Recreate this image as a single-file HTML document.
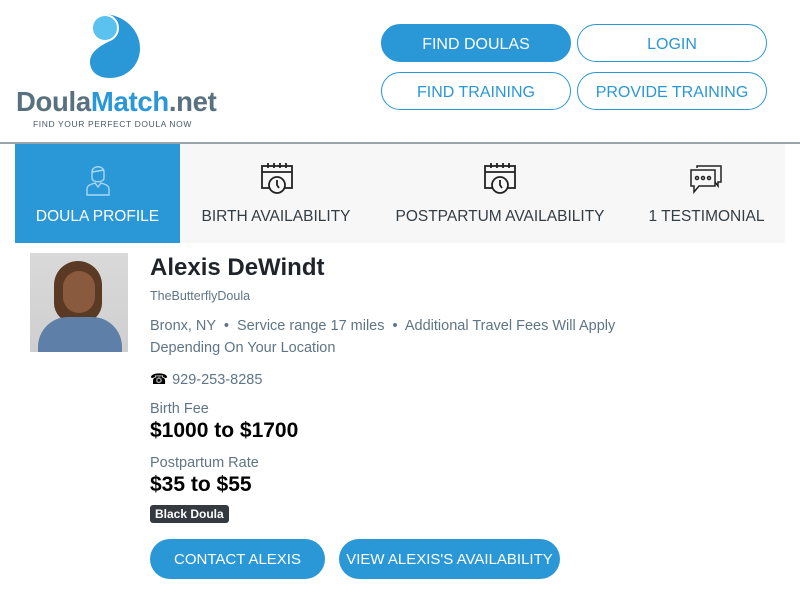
<!DOCTYPE html>
<html><head><style>
body{margin:0;width:800px;height:600px;background:#fff;font-family:"Liberation Sans",sans-serif;position:relative;overflow:hidden}
.a{position:absolute}
.btn{position:absolute;width:188px;height:36px;border:1.5px solid #2a97d6;border-radius:19px;color:#2a97d6;font-size:16px;text-align:center;line-height:40px;box-sizing:content-box}
.btn.f{background:#2a97d6;color:#fff}
.tab{position:absolute;top:144px;height:99px;text-align:center;font-size:15.5px;color:#333d45}
.tab span{position:absolute;left:0;right:0;top:64px}
.g{color:#5f7585;font-size:14.5px}
.cb{position:absolute;top:539px;height:40px;border-radius:20px;background:#2a97d6;color:#fff;font-size:15px;line-height:42px;text-align:center}
</style></head><body>
<svg class="a" style="left:88px;top:12px" width="54" height="68" viewBox="0 0 54 68">
<path d="M14 2 C36 2 52 18 52 36 C52 54 38 66 22 66 C8 66 2 58 2 50 C2 40 12 34 20 30 C28 26 32 20 28 12 C26 6 20 3 14 2Z" fill="#2a97d6"/>
<circle cx="17" cy="16" r="13" fill="#5bc2f0" stroke="#fff" stroke-width="2"/>
</svg>
<div class="a" style="left:16px;top:86px;font-size:27.5px;font-weight:bold;letter-spacing:-0.3px;color:#59707e">Doula<span style="color:#2a97d6">Match</span>.net</div>
<div class="a" style="left:33px;top:119px;font-size:8.5px;color:#475a66;letter-spacing:0.6px">FIND YOUR PERFECT DOULA NOW</div>
<div class="btn f" style="left:381px;top:24px">FIND DOULAS</div>
<div class="btn" style="left:577px;top:24px">LOGIN</div>
<div class="btn" style="left:381px;top:72px">FIND TRAINING</div>
<div class="btn" style="left:577px;top:72px">PROVIDE TRAINING</div>
<div class="a" style="left:0;top:142px;width:800px;height:1.5px;background:#9aa6ae"></div>
<div class="a" style="left:15px;top:144px;width:770px;height:99px;background:#f7f7f7"></div>
<div class="tab" style="left:15px;width:165px;background:#2a97d6;color:#fff">
<svg class="a" style="left:70px;top:18px" width="26" height="34" viewBox="0 0 26 34" fill="none" stroke="#a9d8f5" stroke-width="1.4"><path d="M7 10 C7 3 19 3 19 10 L19 16 C19 21 7 21 7 16Z"/><path d="M7 10 L19 8"/><path d="M2 33 L2 27 C2 23 7 22 10 21 L13 25 L16 21 C19 22 24 23 24 27 L24 33Z"/></svg>
<span>DOULA PROFILE</span></div>
<div class="tab" style="left:180px;width:192px">
<svg class="a" style="left:80px;top:18px" width="34" height="34" viewBox="0 0 34 34" fill="none" stroke="#222" stroke-width="1.8"><rect x="2" y="4" width="30" height="22"/><path d="M2 10H32M8 1V6M14 1V6M20 1V6M26 1V6"/><circle cx="17" cy="23" r="8" fill="#f7f7f7"/><path d="M17 18V23L19 26"/></svg>
<span>BIRTH AVAILABILITY</span></div>
<div class="tab" style="left:372px;width:256px">
<svg class="a" style="left:111px;top:18px" width="34" height="34" viewBox="0 0 34 34" fill="none" stroke="#222" stroke-width="1.8"><rect x="2" y="4" width="30" height="22"/><path d="M2 10H32M8 1V6M14 1V6M20 1V6M26 1V6"/><circle cx="17" cy="23" r="8" fill="#f7f7f7"/><path d="M17 18V23L19 26"/></svg>
<span>POSTPARTUM AVAILABILITY</span></div>
<div class="tab" style="left:628px;width:157px">
<svg class="a" style="left:61px;top:20px" width="34" height="32" viewBox="0 0 34 32" fill="none" stroke="#222" stroke-width="1.5"><path d="M8 4V2H32V18H29V22L26 18"/><path d="M2 6H26V22H10L5 28V22H2Z" fill="#f7f7f7"/><circle cx="8" cy="14" r="1.5"/><circle cx="14" cy="14" r="1.5"/><circle cx="20" cy="14" r="1.5"/></svg>
<span>1 TESTIMONIAL</span></div>
<div class="a" style="left:30px;top:253px;width:98px;height:99px;background:linear-gradient(#d9d9d9,#cfcfcf)">
<div class="a" style="left:24px;top:8px;width:48px;height:62px;border-radius:24px 24px 20px 20px;background:#5a3a25"></div>
<div class="a" style="left:33px;top:18px;width:32px;height:42px;border-radius:16px;background:#8a5a3e"></div>
<div class="a" style="left:8px;top:64px;width:84px;height:35px;border-radius:30px 30px 0 0;background:#5d7fa8"></div></div>
<div class="a" style="left:150px;top:254px;font-size:24px;font-weight:bold;color:#1f242a">Alexis DeWindt</div>
<div class="a g" style="left:150px;top:289px;font-size:12.5px">TheButterflyDoula</div>
<div class="a g" style="left:150px;top:315px;line-height:22px;width:500px">Bronx, NY &nbsp;•&nbsp; Service range 17 miles &nbsp;•&nbsp; Additional Travel Fees Will Apply Depending On Your Location</div>
<div class="a g" style="left:150px;top:372px"><span style="color:#000">&#x260E;&#xFE0E;</span> 929-253-8285</div>
<div class="a g" style="left:150px;top:401px">Birth Fee</div>
<div class="a" style="left:150px;top:419px;font-size:21px;font-weight:bold;color:#000">$1000 to $1700</div>
<div class="a g" style="left:150px;top:455px">Postpartum Rate</div>
<div class="a" style="left:150px;top:473px;font-size:21px;font-weight:bold;color:#000">$35 to $55</div>
<div class="a" style="left:150px;top:505px;background:#343a40;color:#fff;font-size:12px;font-weight:bold;padding:1px 5px;border-radius:3px;height:16px;line-height:16px">Black Doula</div>
<div class="cb" style="left:150px;width:175px">CONTACT ALEXIS</div>
<div class="cb" style="left:339px;width:221px">VIEW ALEXIS'S AVAILABILITY</div>
</body></html>
